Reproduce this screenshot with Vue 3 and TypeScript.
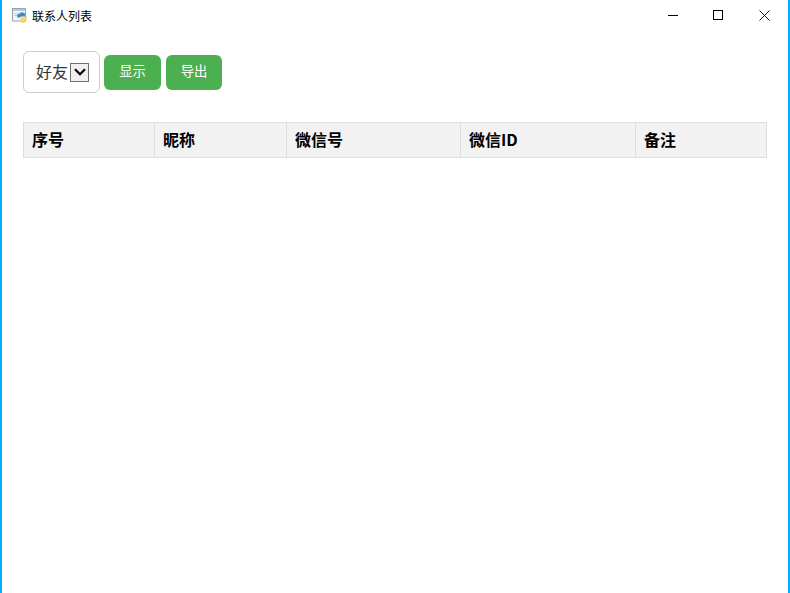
<script setup lang="ts">
const columns: { label: string; width: number }[] = [
  { label: '序号', width: 131 },
  { label: '昵称', width: 132 },
  { label: '微信号', width: 174 },
  { label: '微信ID', width: 175 },
  { label: '备注', width: 130 },
]
</script>

<template>
  <div class="window">
    <header class="titlebar">
      <div class="title">
        <svg class="app-icon" width="16" height="16" viewBox="0 0 16 16">
          <rect x="0.5" y="1.5" width="13" height="12.500" fill="#f2f5f9" stroke="#9aa3ad" />
          <rect x="1" y="2" width="12" height="2" fill="#a9cdea" />
          <rect x="2" y="6" width="3" height="1" fill="#c3ccd6" />
          <rect x="2" y="8" width="3" height="1" fill="#c3ccd6" />
          <path d="M5 9.500c0-2 .8-3 2-3h1V5.500h3c1.200 0 2 .7 2 1.800V9.500H8.500v1H6.300C5.500 10.500 5 10.200 5 9.500z" fill="#4c86bd" />
          <path d="M8.500 10.500h5V8.500h.6c.6.400.9 1.200.9 2.300 0 1.400-.6 2.200-1.500 2.200H13v1.500c0 1-.9 1.500-2.200 1.500-1.400 0-2.300-.7-2.300-1.700z" fill="#f8d765" />
        </svg>
        <span>联系人列表</span>
      </div>
      <div class="controls">
        <button class="ctrl" type="button" aria-label="最小化">
          <svg width="10" height="10" viewBox="0 0 10 10"><path d="M0 5.500h10" stroke="#000" fill="none" /></svg>
        </button>
        <button class="ctrl" type="button" aria-label="最大化">
          <svg width="10" height="10" viewBox="0 0 10 10"><rect x="0.500" y="0.500" width="9" height="9" stroke="#000" fill="none" /></svg>
        </button>
        <button class="ctrl close" type="button" aria-label="关闭">
          <svg width="11" height="11" viewBox="0 0 11 11"><path d="M0.500 0.500l10 10M10.500 0.500l-10 10" stroke="#000" fill="none" stroke-width="0.900" /></svg>
        </button>
      </div>
    </header>

    <main class="content">
      <div class="toolbar">
        <div class="select">
          <span class="select-text">好友</span>
          <span class="arrow">
            <svg width="12" height="8" viewBox="0 0 12 8"><path d="M1 1.200l5 5 5-5" stroke="#000" stroke-width="2.200" fill="none" /></svg>
          </span>
        </div>
        <button class="btn" type="button">显示</button>
        <button class="btn second" type="button">导出</button>
      </div>

      <div class="table">
        <div
          v-for="col in columns"
          :key="col.label"
          class="th"
          :style="{ width: col.width + 'px' }"
        >{{ col.label }}</div>
      </div>
    </main>
  </div>
</template>

<style>
html, body { margin: 0; padding: 0; background: #fff; }
</style>

<style scoped>
.window {
  box-sizing: border-box;
  width: 790px;
  height: 593px;
  background: #fff;
  border-left: 2px solid #00aaff;
  border-right: 2px solid #00aaff;
  font-family: "Noto Sans CJK SC", "Liberation Sans", sans-serif;
  color: #000;
  overflow: hidden;
}
.titlebar {
  height: 30px;
  display: flex;
  align-items: center;
  justify-content: space-between;
}
.title {
  display: flex;
  align-items: center;
  gap: 4px;
  padding-left: 10px;
  font-size: 12px;
}
.app-icon { display: block; }
.controls {
  display: flex;
  gap: 35px;
  padding-right: 18px;
}
.ctrl {
  width: 10px;
  height: 30px;
  padding: 0;
  border: 0;
  background: none;
  display: flex;
  align-items: center;
  justify-content: center;
}
.ctrl.close {
  width: 12px;
  justify-content: flex-end;
}
.ctrl svg { display: block; flex: none; }
.content { padding: 21px 21px 0; }
.toolbar {
  height: 42px;
  display: flex;
  align-items: center;
}
.select {
  box-sizing: border-box;
  width: 77px;
  height: 42px;
  padding: 0 10px 0 12px;
  border: 1px solid #ccc;
  border-radius: 6px;
  display: flex;
  align-items: center;
  justify-content: space-between;
  font-size: 16px;
  color: #333;
}
.select-text { padding-bottom: 2px; }
.arrow {
  box-sizing: border-box;
  width: 19px;
  height: 19px;
  background: #f0f0f0;
  border: 1px solid #707070;
  display: flex;
  align-items: center;
  justify-content: center;
}
.arrow svg { display: block; }
.btn {
  width: 57px;
  height: 35px;
  margin-left: 4px;
  padding: 0 0 3px;
  border: 0;
  border-radius: 6px;
  background: #4caf50;
  color: #fff;
  font-family: inherit;
  font-size: 13.33px;
}
.btn.second { width: 56px; margin-left: 5px; }
.table {
  box-sizing: border-box;
  display: flex;
  width: 744px;
  height: 36px;
  margin-top: 29px;
  background: #f2f2f2;
  border: 1px solid #ddd;
}
.th {
  box-sizing: border-box;
  flex: none;
  padding-left: 8px;
  border-right: 1px solid #ddd;
  font-size: 16px;
  font-weight: 700;
  line-height: 32px;
}
.th:last-child { border-right: 0; }
</style>
